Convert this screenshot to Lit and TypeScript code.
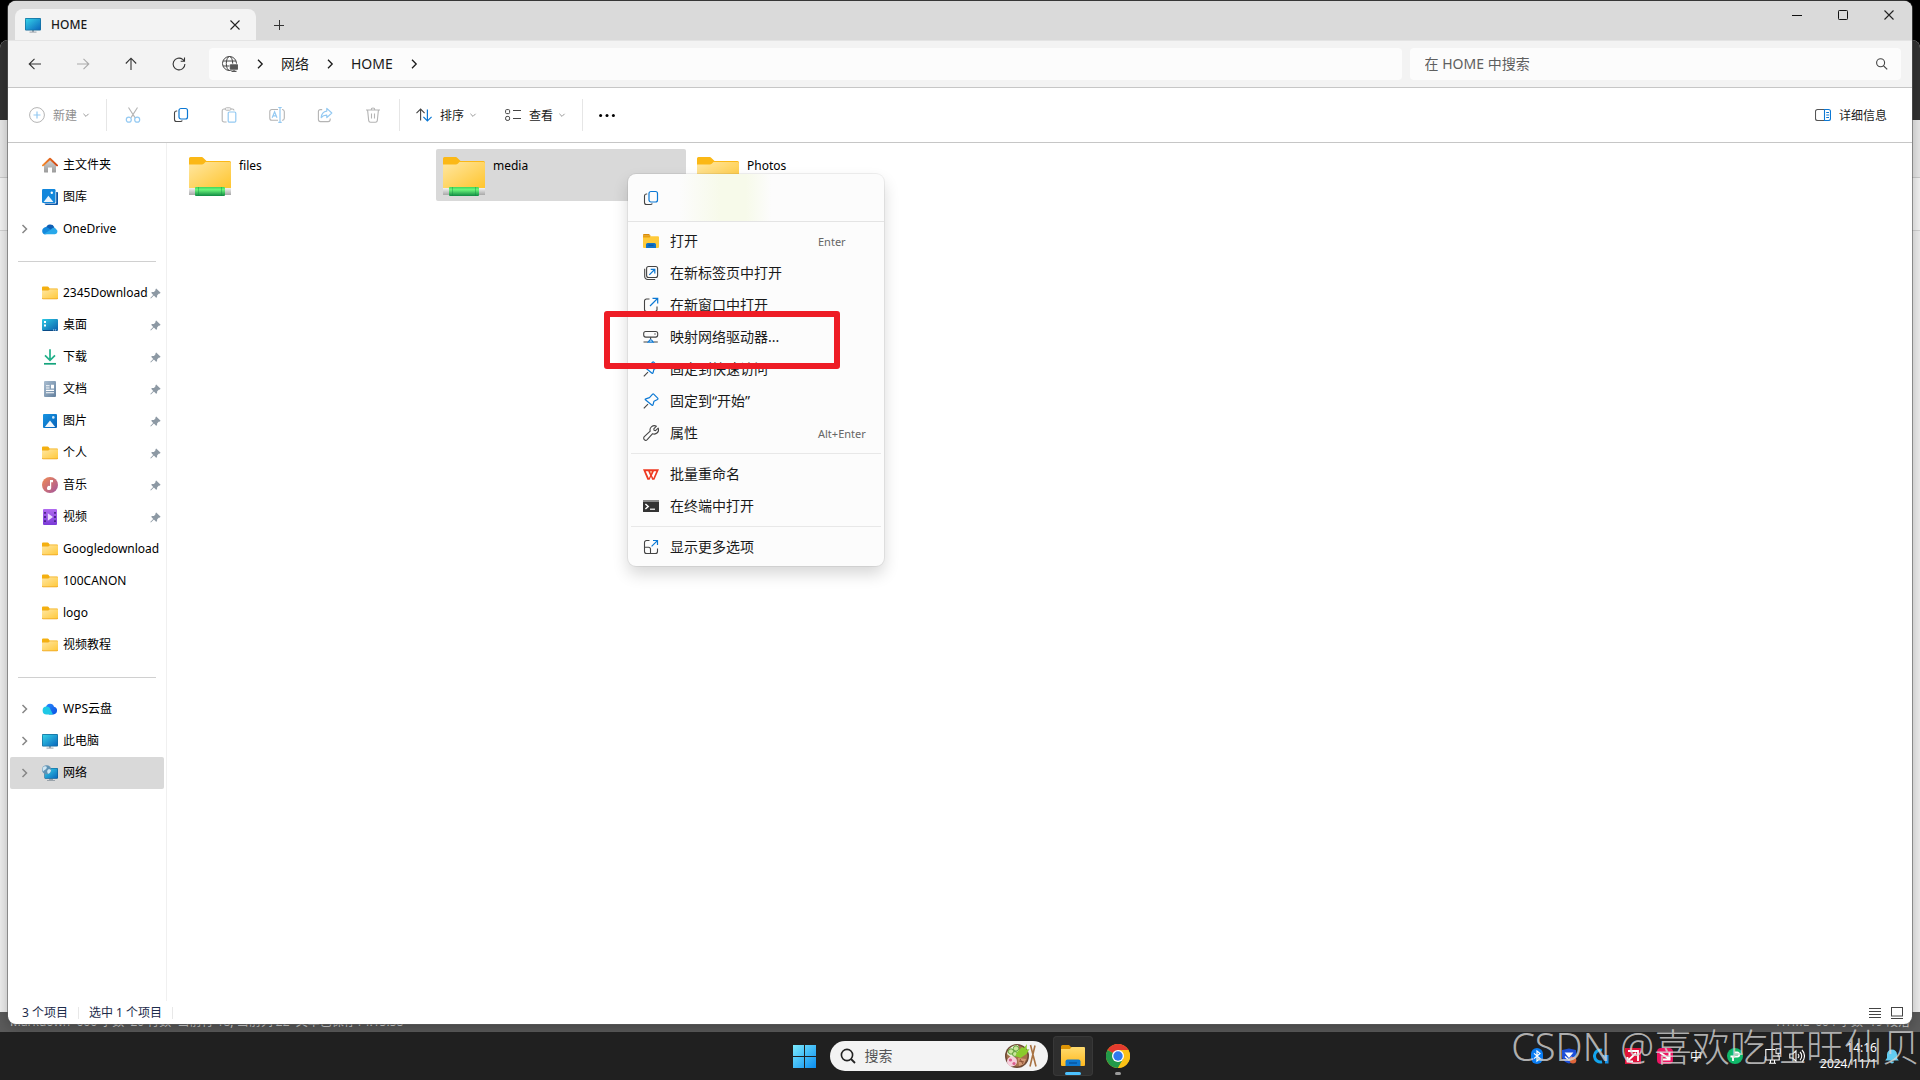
import { LitElement, html, css, nothing, type TemplateResult } from "lit";
import { customElement, state } from "lit/decorators.js";

const BLUE = "#0b78d4";

const copyIcon = html`<svg class="i16" viewBox="0 0 16 16" fill="none" aria-hidden="true">
  <rect x="6" y="1.5" width="8.5" height="10.5" rx="2" stroke="${BLUE}" stroke-width="1.2"/>
  <path d="M4.2 4H3.5a2 2 0 0 0-2 2v6.5a2 2 0 0 0 2 2h4a2 2 0 0 0 1.8-1" stroke="#444" stroke-width="1.1"/></svg>`;

const monitorIcon = html`<svg class="i16" viewBox="0 0 16 16" aria-hidden="true">
  <defs><linearGradient id="mon" x1="0" y1="0" x2="1" y2="1"><stop offset="0" stop-color="#35d3e8"/><stop offset="1" stop-color="#0a67bd"/></linearGradient></defs>
  <path d="M7 13h2v2H7z" fill="#9aa3ab"/><path d="M4.5 14.6h7v1h-7z" fill="#9aa3ab"/>
  <rect x="0" y="1" width="16" height="12.5" rx="1" fill="#146c9c"/><rect x=".7" y="1.7" width="14.6" height="11" rx=".5" fill="url(#mon)"/></svg>`;

const folderIcon = html`<svg class="i16" viewBox="0 0 16 16" aria-hidden="true">
  <defs><linearGradient id="fol" x1="0" y1="0" x2="1" y2="1"><stop offset="0" stop-color="#ffe7a3"/><stop offset="1" stop-color="#ffc93c"/></linearGradient></defs>
  <path d="M0 2.6a1 1 0 0 1 1-1h4.6c.5 0 .8.2 1 .5l1 1.4H15a1 1 0 0 1 1 1V8H0z" fill="#f4b011"/>
  <path d="M0 5.6h6.3l1.6-1.3H16v9a1 1 0 0 1-1 1H1a1 1 0 0 1-1-1z" fill="#eda21b"/>
  <path d="M0 5.4h6.3l1.6-1.2H16v8.4a1 1 0 0 1-1 1H1a1 1 0 0 1-1-1z" fill="url(#fol)"/></svg>`;

const pinIcon = html`<svg class="pin" viewBox="0 0 11 11" aria-hidden="true">
  <path d="M6.2.4 10.6 4.8 9.6 5.7 9 5.4 7.2 7.2 7 9.2 6.1 9.8 3.9 7.6.9 10.6.3 10.1 3.2 6.9 1.2 4.8 2 4 4 3.9 5.7 2 5.4 1.3z" fill="#8d99a4"/></svg>`;

const chevron = html`<svg class="chev" viewBox="0 0 8 12" fill="none" aria-hidden="true"><path d="M2 1.8 6.2 6 2 10.2" stroke="currentColor" stroke-width="1.3"/></svg>`;
const caret = html`<svg class="caret" viewBox="0 0 8 8" fill="none" aria-hidden="true"><path d="M1.4 2.8 4 5.4 6.6 2.8" stroke="#999" stroke-width="1"/></svg>`;

const sideIcons: Record<string, TemplateResult> = {
  folder: folderIcon,
  monitor: monitorIcon,
  home: html`<svg class="i16" viewBox="0 0 16 16" aria-hidden="true">
    <defs><linearGradient id="hm" x1="0" y1="0" x2="0" y2="1"><stop offset="0" stop-color="#d6d6d6"/><stop offset="1" stop-color="#9a9a9a"/></linearGradient>
    <linearGradient id="hr" x1="0" y1="0" x2="1" y2="0"><stop offset="0" stop-color="#f58a2b"/><stop offset="1" stop-color="#cf4413"/></linearGradient></defs>
    <path d="M2 7.4 8 2l6 5.4v7.3a.9.9 0 0 1-.9.9H10v-5.2H6v5.2H2.9a.9.9 0 0 1-.9-.9z" fill="url(#hm)"/>
    <path d="M1 8.4 8 1.7l7 6.7" fill="none" stroke="url(#hr)" stroke-width="2" stroke-linecap="round" stroke-linejoin="round"/></svg>`,
  gallery: html`<svg class="i16" viewBox="0 0 16 16" aria-hidden="true">
    <path d="M3 3h12.2a.8.8 0 0 1 .8.8V15a.9.9 0 0 1-.9.9H4a1.5 1.5 0 0 1-1.5-1.4z" fill="#0b57a8"/>
    <rect x="0" y="0" width="14.2" height="14.6" rx="1.2" fill="#fff"/><rect x="0" y="0" width="13.5" height="14" rx="1.2" fill="#1287dc"/>
    <path d="M1.6 12.9 6.4 6.8l5 6.1z" fill="#e9f4fd"/><circle cx="9.8" cy="3.8" r="1.2" fill="#fff"/></svg>`,
  onedrive: html`<svg class="i16" viewBox="0 0 16 16" aria-hidden="true">
    <path d="M4 6.8A4.4 4.4 0 0 1 12.2 6L12 10H5z" fill="#0f5fb4"/><path d="M.2 10.2A3.7 3.7 0 0 1 6 6.8l5 3.2-7 3.3H3.4A3.2 3.2 0 0 1 .2 10.2z" fill="#1489dc"/>
    <path d="M2 12.9 9 8.6c1.3-2.6 4.2-2.4 4.9-.6A2.8 2.8 0 0 1 13 13.3H3.2c-.5 0-.9-.2-1.2-.4z" fill="#28a8ea"/></svg>`,
  desktop: html`<svg class="i16" viewBox="0 0 16 16" aria-hidden="true">
    <defs><linearGradient id="dk" x1="0" y1="0" x2="1" y2="1"><stop offset="0" stop-color="#2ccbe4"/><stop offset="1" stop-color="#0b5cab"/></linearGradient></defs>
    <rect x="0" y="2" width="16" height="12" rx="1" fill="url(#dk)"/><path d="M2 4h2v2H2zM2 7.4h2v2H2z" fill="#fff"/><path d="M1 13h14v1H1z" fill="#0a4a86"/><path d="M11 12.4h1.2v1H11zM13 12.4h1.2v1H13z" fill="#bfe6ff"/></svg>`,
  download: html`<svg class="i16" viewBox="0 0 16 16" fill="none" aria-hidden="true">
    <path d="M8 .2V11M3 6.4 8 11.4l5-5" stroke="#22b08a" stroke-width="1.7"/><path d="M2 14.8h12" stroke="#14a37c" stroke-width="1.7"/></svg>`,
  doc: html`<svg class="i16" viewBox="0 0 16 16" aria-hidden="true">
    <defs><linearGradient id="dc" x1="0" y1="0" x2="1" y2="1"><stop offset="0" stop-color="#a9bdd0"/><stop offset="1" stop-color="#63809e"/></linearGradient></defs>
    <rect x="2" y="0" width="12" height="16" rx="1" fill="url(#dc)"/><path d="M4 4.2h3.6v1H4zM4 6.4h3.6v1H4zM9 3.8h3v3.6H9zM4 8.8h8v1.1H4zM4 11.2h8v1.1H4z" fill="#fff"/></svg>`,
  picture: html`<svg class="i16" viewBox="0 0 16 16" aria-hidden="true">
    <defs><linearGradient id="pc" x1="0" y1="0" x2="1" y2="1"><stop offset="0" stop-color="#1795e3"/><stop offset="1" stop-color="#0862b8"/></linearGradient></defs>
    <rect x="1" y="1" width="14" height="14" rx="1" fill="url(#pc)"/><path d="M2.8 14 8 7.6 13.2 14z" fill="#f2f8fd"/><circle cx="11.3" cy="4.4" r="1.3" fill="#cfe8fb"/></svg>`,
  music: html`<svg class="i16" viewBox="0 0 16 16" aria-hidden="true">
    <defs><linearGradient id="ms" x1="0" y1="0" x2="1" y2="1"><stop offset="0" stop-color="#f28b53"/><stop offset="1" stop-color="#a2559d"/></linearGradient></defs>
    <circle cx="8" cy="8" r="8" fill="url(#ms)"/><path d="M8 3h3v2.2H9.2V11A2.1 2.1 0 1 1 8 9.1z" fill="#fff"/></svg>`,
  video: html`<svg class="i16" viewBox="0 0 16 16" aria-hidden="true">
    <defs><linearGradient id="vd" x1="0" y1="0" x2="0" y2="1"><stop offset="0" stop-color="#b06af0"/><stop offset="1" stop-color="#7b3bd8"/></linearGradient></defs>
    <rect x="1" y="0" width="14" height="16" rx="1" fill="url(#vd)"/><path d="M2.2 3h1.6v1.8H2.2zM2.2 7.1h1.6v1.8H2.2zM2.2 11.2h1.6V13H2.2zM12.2 3h1.6v1.8h-1.6zM12.2 7.1h1.6v1.8h-1.6zM12.2 11.2h1.6V13h-1.6z" fill="#3c1b78"/><path d="M5.8 4.3 11 8l-5.2 3.8z" fill="#ecdcff"/></svg>`,
  wps: html`<svg class="i16" viewBox="0 0 16 16" aria-hidden="true">
    <defs><linearGradient id="wp" x1="0" y1="0" x2="1" y2="1"><stop offset="0" stop-color="#2a8bff"/><stop offset="1" stop-color="#0a4fe0"/></linearGradient></defs>
    <path d="M4 6a4.1 4.1 0 0 1 8-.3 3.9 3.9 0 0 1-.6 7.7H7z" fill="url(#wp)"/><path d="M4.6 5.4a4 4 0 0 1 3.9 3.2L11 13.4H4.6a4 4 0 0 1 0-8z" fill="#1fc8e6"/></svg>`,
  network: html`<svg class="i16" viewBox="0 0 16 16" aria-hidden="true">
    <path d="M7 13.5h4v1.6H7z" fill="#9aa3ab"/><path d="M5 15h8v1H5z" fill="#9aa3ab"/>
    <rect x="2.4" y="3" width="13.6" height="10.8" rx="1" fill="#0e5c8f"/><rect x="3" y="3.6" width="12.4" height="9.6" rx=".5" fill="url(#mon)"/>
    <circle cx="4.6" cy="4.8" r="4.6" fill="#5f93b5"/><path d="M2 1.6c2-1 3.4 0 2.6 1.6S2.4 4.6 1 6.4C0 4.4.6 2.4 2 1.6zM6 4.6c1.6-1 2.7-.2 3 .8-.3 1.8-1.6 3-3 3.4-.6-1.3-1.6-2.6 0-4.2z" fill="#cfe6f2"/></svg>`,
};

const menuIcons: Record<string, TemplateResult> = {
  open: html`<svg class="i16" viewBox="0 0 16 16" aria-hidden="true">
    <path d="M0 2a1 1 0 0 1 1-1h5l1.6 1.8H0z" fill="#d98b06"/><path d="M0 3.2h15a1 1 0 0 1 1 1V14a1 1 0 0 1-1 1H1a1 1 0 0 1-1-1z" fill="#ffca3a"/><path d="M0 2.8h7.8L6.6 4.4H0z" fill="#e9a010"/>
    <path d="M3 15v-3.4A1.6 1.6 0 0 1 4.6 10h6.8a1.6 1.6 0 0 1 1.6 1.6V15z" fill="#1173c9"/><path d="M5.4 12.2h5.2" stroke="#0a4e96" stroke-width="1"/></svg>`,
  newtab: html`<svg class="i16" viewBox="0 0 16 16" fill="none" aria-hidden="true">
    <rect x="3.6" y="1.5" width="11" height="11" rx="2" stroke="#444" stroke-width="1.1"/><path d="M1.7 3.8v7.7a3 3 0 0 0 3 3h7.5" stroke="#444" stroke-width="1.1"/>
    <path d="M6.3 9.8 11.6 4.5M7.7 4.3h4.1v4.1" stroke="${BLUE}" stroke-width="1.2"/></svg>`,
  newwin: html`<svg class="i16" viewBox="0 0 16 16" fill="none" aria-hidden="true">
    <path d="M6.5 2H3.5a2 2 0 0 0-2 2v8.5a2 2 0 0 0 2 2H12a2 2 0 0 0 2-2V9.5" stroke="#444" stroke-width="1.1"/>
    <path d="M7 9 14.5 1.5M9.5 1.3h5.2v5.2" stroke="${BLUE}" stroke-width="1.2"/></svg>`,
  drive: html`<svg class="i16" viewBox="0 0 16 16" fill="none" aria-hidden="true">
    <rect x=".7" y="2.5" width="14" height="5.6" rx="2" stroke="#444" stroke-width="1.1"/><circle cx="12" cy="5" r=".7" fill="#444"/><path d="M7.6 8.2v2.2M.5 13H5M10.2 13h4.6" stroke="#444" stroke-width="1.1"/>
    <path d="M5.2 13.2 6.8 11h1.8l1.6 2.2z" stroke="${BLUE}" stroke-width="1.2"/></svg>`,
  pin: html`<svg class="i16" viewBox="0 0 16 16" fill="none" aria-hidden="true">
    <path d="M.8 15.4 5 11.2" stroke="#444" stroke-width="1.1"/>
    <path d="M9.6 1.2c.3-.3.8-.3 1.1 0l4 4c.4.4.3 1-.2 1.3L11 8.2l-1 3.7c-.1.5-.7.6-1 .3L2.4 6.8c-.3-.3-.2-.9.3-1L6.5 4.7z" stroke="${BLUE}" stroke-width="1.2" stroke-linejoin="round"/></svg>`,
  wrench: html`<svg class="i16" viewBox="0 0 16 16" fill="none" aria-hidden="true">
    <path d="M13.4 1.2 10.8 3.9l.3 1.4 1.4.4 2.7-2.6a4.3 4.3 0 0 1-5.6 5.6L4.2 14.600a2 2 0 0 1-2.900-2.900L7.200 6.200A4.300 4.300 0 0 1 13.400 1.200z" stroke="#444" stroke-width="1.1" stroke-linejoin="round"/></svg>`,
  wpsw: html`<svg class="i16" viewBox="0 0 16 16" aria-hidden="true">
    <path d="M0 3.3h16L11.4 13.8H9.2L8 10.8 6.6 13.8H4.400z" fill="#ee3a22"/><path d="M2.700 5.300h2.500l1.900 4.300-1.200 2.600zM8.900 9.600l2-4.300h2.400l-3 6.900z" fill="#fff"/><path d="M6.900 5.300h2.200L8 7.800z" fill="#ffd2a6"/></svg>`,
  term: html`<svg class="i16" viewBox="0 0 16 16" aria-hidden="true">
    <rect x="0" y="2" width="16" height="12" rx=".6" fill="#333"/><path d="M0 2h16v2H0z" fill="#8a8a8a"/><path d="M2.400 6 5.200 8.500 2.400 11" stroke="#fff" stroke-width="1.5" fill="none"/><path d="M7 10.600h5v1.200H7z" fill="#fff"/></svg>`,
  more: html`<svg class="i16" viewBox="0 0 16 16" fill="none" aria-hidden="true">
    <path d="M6.500 1.500h-3a2 2 0 0 0-2 2v9a2 2 0 0 0 2 2H12.500a2 2 0 0 0 2-2V9.600M1.500 8.200h4a2 2 0 0 1 2 2v4.300" stroke="#444" stroke-width="1.1"/>
    <path d="M8.600 7.400 14.400 1.600M10 1.500h4.500V6" stroke="${BLUE}" stroke-width="1.2"/></svg>`,
};

type Tool = { label: string; icon: TemplateResult; off: boolean };
const tools: Tool[] = [
  { label: "剪切", off: true, icon: html`<svg class="i16" viewBox="0 0 16 16" fill="none" aria-hidden="true"><path d="M3.5.5 10 10.6M12.5.5 6 10.6" stroke="#b4b4b4" stroke-width="1.1"/><circle cx="3.8" cy="12.7" r="2.5" stroke="#93c9f2" stroke-width="1.2"/><circle cx="12.2" cy="12.7" r="2.5" stroke="#93c9f2" stroke-width="1.2"/></svg>` },
  { label: "复制", off: false, icon: copyIcon },
  { label: "粘贴", off: true, icon: html`<svg class="i16" viewBox="0 0 16 16" fill="none" aria-hidden="true"><path d="M4.2 2H3a1.8 1.8 0 0 0-1.8 1.8v9.4A1.8 1.8 0 0 0 3 15h2.6M10 2h1.4a1.6 1.6 0 0 1 1.6 1.6" stroke="#b4b4b4" stroke-width="1.1"/><rect x="4.2" y=".8" width="5.8" height="2.4" rx="1.2" stroke="#b4b4b4"/><rect x="7.2" y="5" width="7.6" height="10.2" rx="1.2" stroke="#93c9f2" stroke-width="1.2"/></svg>` },
  { label: "重命名", off: true, icon: html`<svg class="i16" viewBox="0 0 16 16" fill="none" aria-hidden="true"><path d="M9 2.5H2.8a2 2 0 0 0-2 2v6.8a2 2 0 0 0 2 2H9M13 2.5a2.2 2.2 0 0 1 2.3 2v6.8a2.2 2.2 0 0 1-2.3 2" stroke="#b4b4b4" stroke-width="1.1"/><path d="M3.2 10.8 5.6 4.8 8 10.8M4.2 8.9h2.8M11 .5v15M9.3.5h3.4M9.3 15.4h3.4" stroke="#93c9f2" stroke-width="1.2"/></svg>` },
  { label: "共享", off: true, icon: html`<svg class="i16" viewBox="0 0 16 16" fill="none" aria-hidden="true"><path d="M5.2 2.6H3.4a2 2 0 0 0-2 2v8a2 2 0 0 0 2 2h7.8a2 2 0 0 0 2-2v-1.2" stroke="#b4b4b4" stroke-width="1.1"/><path d="M9.8 1.4 14.8 6l-5 4.6V8.2c-2.4-.1-4.2.7-5.6 2.4.3-3.6 2-6 5.6-6.5z" stroke="#93c9f2" stroke-width="1.2" stroke-linejoin="round"/></svg>` },
  { label: "删除", off: true, icon: html`<svg class="i16" viewBox="0 0 16 16" fill="none" aria-hidden="true"><path d="M1 3h14M2.6 3.2l1.1 10.4a1.8 1.8 0 0 0 1.8 1.6h5a1.8 1.8 0 0 0 1.8-1.6L13.4 3.2M6.2 2.8a1.8 1.8 0 0 1 3.6 0M6.5 6.4v5.2M9.5 6.4v5.2" stroke="#b4b4b4" stroke-width="1.1"/></svg>` },
];

type SideItem = { label: string; icon: string; pinned?: boolean; expandable?: boolean; selected?: boolean } | null;
const sidebar: SideItem[] = [
  { label: "主文件夹", icon: "home" },
  { label: "图库", icon: "gallery" },
  { label: "OneDrive", icon: "onedrive", expandable: true },
  null,
  { label: "2345Downloads", icon: "folder", pinned: true },
  { label: "桌面", icon: "desktop", pinned: true },
  { label: "下载", icon: "download", pinned: true },
  { label: "文档", icon: "doc", pinned: true },
  { label: "图片", icon: "picture", pinned: true },
  { label: "个人", icon: "folder", pinned: true },
  { label: "音乐", icon: "music", pinned: true },
  { label: "视频", icon: "video", pinned: true },
  { label: "Googledownload", icon: "folder" },
  { label: "100CANON", icon: "folder" },
  { label: "logo", icon: "folder" },
  { label: "视频教程", icon: "folder" },
  null,
  { label: "WPS云盘", icon: "wps", expandable: true },
  { label: "此电脑", icon: "monitor", expandable: true },
  { label: "网络", icon: "network", expandable: true, selected: true },
];

type MenuItem = { label: string; icon: string; keys?: string } | null;
const menuItems: MenuItem[] = [
  { label: "打开", icon: "open", keys: "Enter" },
  { label: "在新标签页中打开", icon: "newtab" },
  { label: "在新窗口中打开", icon: "newwin" },
  { label: "映射网络驱动器...", icon: "drive" },
  { label: "固定到快速访问", icon: "pin" },
  { label: "固定到“开始”", icon: "pin" },
  { label: "属性", icon: "wrench", keys: "Alt+Enter" },
  null,
  { label: "批量重命名", icon: "wpsw" },
  { label: "在终端中打开", icon: "term" },
  null,
  { label: "显示更多选项", icon: "more" },
];

const netFolder = html`<svg class="big" viewBox="0 0 42 39" aria-hidden="true">
  <defs>
    <linearGradient id="nf" x1="0" y1="0" x2="1" y2="1"><stop offset="0" stop-color="#ffe7a2"/><stop offset="1" stop-color="#ffc52e"/></linearGradient>
    <linearGradient id="np" x1="0" y1="0" x2="0" y2="1"><stop offset="0" stop-color="#3fd65c"/><stop offset=".3" stop-color="#6cf57c"/><stop offset="1" stop-color="#0f8a43"/></linearGradient>
    <linearGradient id="ng" x1="0" y1="0" x2="0" y2="1"><stop offset="0" stop-color="#f2f2f2"/><stop offset="1" stop-color="#a8a8a8"/></linearGradient>
  </defs>
  <path d="M0 1.5A1.5 1.5 0 0 1 1.5 0H12c1.2 0 2 .4 2.7 1.2L17.5 4H40.5A1.5 1.5 0 0 1 42 5.5V12H0z" fill="#fbb816"/>
  <path d="M0 7.6h12c1.5 0 2.3-.5 3-1.2L16.5 5H40.6A1.4 1.4 0 0 1 42 6.4V31H0z" fill="url(#nf)"/>
  <path d="M0 31h42v7H0z" fill="url(#ng)"/><rect x="6" y="30" width="30" height="9" rx="1" fill="url(#np)"/>
  <path d="M9.5 30v9M32.5 30v9" stroke="#0f8a43" stroke-opacity=".4"/></svg>`;

const magnifier = html`<svg class="i16" viewBox="0 0 16 16" fill="none" aria-hidden="true"><circle cx="6.6" cy="6.8" r="4" stroke="currentColor" stroke-width="1.1"/><path d="M9.6 9.8 13.2 13.4" stroke="currentColor" stroke-width="1.2"/></svg>`;

const trayIcons: { label: string; icon: TemplateResult }[] = [
  { label: "蓝牙", icon: html`<svg class="i16" viewBox="0 0 16 16" fill="none"><rect x="2" y="0" width="12" height="16" rx="6" fill="#0a7cf2"/><path d="M5 5.4 11 10.6 8 13V3l3 2.4L5 10.6" stroke="#fff" stroke-width="1.2"/></svg>` },
  { label: "安全", icon: html`<svg class="i16" viewBox="0 0 16 16" fill="none"><path d="M1 2 8 .5 15 2v6c0 4-3 6.4-7 7.6C4 14.4 1 12 1 8z" fill="#1d4fd8"/><path d="M3.6 4.600h8.800L8 10z" fill="#fff"/><path d="M4 8.500 8 12l3-3" stroke="#fff" stroke-width="1.4"/><circle cx="12" cy="12.2" r="3.3" fill="#e0653a"/></svg>` },
  { label: "同步", icon: html`<svg class="i16" viewBox="0 0 16 16" fill="none"><path d="M9 2.200A6 6 0 1 0 9 13.800" stroke="#12a5ee" stroke-width="3"/><path d="M9 7h6.500v8.500H12V11z" fill="#1793e6"/></svg>` },
  { label: "显卡", icon: html`<svg class="i16" viewBox="0 0 16 16" fill="none"><rect width="16" height="16" fill="#e0123a"/><path d="M3 3h10v10M3 12.500 11 5M2.500 9v4.500H8" stroke="#fff" stroke-width="1.8"/></svg>` },
  { label: "远程", icon: html`<svg class="i16" viewBox="0 0 16 16" fill="none"><rect width="16" height="16" rx="4" fill="#ec1562"/><path d="M3 4.500 12.500 11M12.500 4v7.500H6" stroke="#fff" stroke-width="2"/></svg>` },
];

@customElement("app-root")
export class AppRoot extends LitElement {
  @state() private query = "";

  static styles = css`
    :host {
      display: block;
      font-family: "Noto Sans", "Noto Sans CJK SC", sans-serif;
      font-size: 12px;
      color: #1a1a1a;
    }
    * { box-sizing: border-box; }
    button { font: inherit; color: inherit; background: none; border: 0; margin: 0; padding: 0; }
    a { color: inherit; text-decoration: none; }
    ul { list-style: none; margin: 0; padding: 0; }
    svg { display: block; flex: none; }
    .i16 { width: 16px; height: 16px; }
    .chev { width: 8px; height: 12px; }
    .caret { width: 8px; height: 8px; margin-left: -3px; }
    .pin { width: 11px; height: 11px; }

    .desktop { position: relative; display: flex; flex-direction: column; min-height: 100vh; background: #000; overflow: hidden; }

    .behind { position: absolute; inset: 40px 0 48px; display: flex; flex-direction: column; background: #f2f2f2; border-radius: 8px 8px 0 0; overflow: hidden; }
    .behind-head { height: 80px; background: #333; }
    .behind-bar { height: 58px; background: #ececec; border-bottom: 1px solid #cfcfcf; }
    .behind-row { height: 53px; background: #f8f8f8; border-bottom: 1px solid #d6d6d6; }
    .behind-body { flex: 1; }
    .behind-foot { display: flex; justify-content: space-between; height: 20px; padding: 0 10px; background: #5c5c5c; color: #d8d8d8; line-height: 20px; white-space: pre; }

    .window { position: relative; flex: 1; display: flex; flex-direction: column; margin: 1px 8px 8px; background: #fff; border-radius: 8px; box-shadow: 0 0 0 1px rgba(90, 90, 90, 0.6), 0 4px 16px rgba(0, 0, 0, 0.3); }
    .titlebar { display: flex; height: 39px; padding-left: 7px; background: #dadada; border-radius: 8px 8px 0 0; }
    .tab { display: flex; align-items: center; width: 241px; margin-top: 8px; padding: 0 13px 0 10px; gap: 10px; background: #f3f3f3; border-radius: 8px 8px 0 0; font-weight: 500; }
    .tab span { flex: 1; }
    .tab button, .newtab { display: grid; place-items: center; width: 16px; height: 16px; }
    .newtab { align-self: flex-end; width: 32px; height: 31px; margin-left: 7px; }
    .caption { display: flex; margin-left: auto; }
    .caption button { display: grid; place-items: center; width: 46px; height: 28px; }
    .g10 { width: 10px; height: 10px; }

    .navbar { display: flex; align-items: center; height: 48px; padding: 0 11px 0 3px; background: #f3f3f3; border-bottom: 1px solid #c6c6c6; border-top: 1px solid #e4e4e4; }
    .nav { display: grid; place-items: center; width: 48px; height: 32px; color: #333; }
    .nav.off { color: #aaa; }
    .crumbs { flex: 12 0 12px; display: flex; align-items: center; gap: 17px; min-width: 0; height: 32px; margin: 0 8px 0 6px; padding: 0 13px; background: #fcfcfc; border-radius: 4px; font-size: 14px; }
    .crumbs .i16 { margin-right: 1px; }
    .crumbs a, .search input, .label, .pill span, .status > span { padding-bottom: 2px; }
    .search { flex: 0 0 26%; display: flex; align-items: center; height: 32px; padding: 0 11px 0 15px; background: #fcfcfc; border-radius: 4px; color: #444; }
    .search input { flex: 1; min-width: 0; border: 0; padding: 0 0 2px; background: none; outline: none; font: inherit; font-size: 14px; color: #1a1a1a; }
    .search input::placeholder { color: #5f5f5f; opacity: 1; }

    .toolbar { display: flex; align-items: center; height: 55px; padding: 0 11px 0 7px; border-bottom: 1px solid #c6c6c6; }
    .tool { display: flex; align-items: center; gap: 8px; height: 40px; padding: 0 14px; white-space: nowrap; }
    .tool.off { color: #8f8f8f; }
    .tool.icon { justify-content: center; width: 48px; padding: 0; }
    .tool.more { width: 44px; }
    .sep { width: 1px; height: 32px; margin: 0 2px; background: #e6e6e6; }
    .tool.details { margin-left: auto; }

    .body { flex: 1; display: flex; }
    .side { width: 159px; padding: 6px 2px 0; border-right: 1px solid #f0f0f0; }
    .side-item { display: flex; align-items: center; width: 154px; height: 32px; padding: 0 0 0 11px; color: #000; border-radius: 2px; text-align: left; }
    .side-item .chev { margin-right: 13px; color: #868686; }
    .side-item .chev.none { visibility: hidden; }
    .side-item .label { flex: 1; margin-left: 5px; overflow: hidden; white-space: nowrap; }
    .side-item .pin { margin: 0 3px 0 2px; }
    .side-item.selected { background: #d9d9d9; }
    .side-line { display: flex; align-items: center; height: 32px; padding: 0 8px; }
    .side-line hr { flex: 1; margin: 0; border: 0; border-top: 1px solid #d0d0d0; }

    .files { flex: 1; display: flex; flex-wrap: wrap; align-content: flex-start; gap: 4px; padding: 6px 15px; }
    .file { display: flex; align-items: flex-start; gap: 8px; width: 250px; height: 52px; padding: 8px 7px; border-radius: 2px; color: #000; line-height: 17px; }
    .file.selected { background: #d9d9d9; }
    .big { width: 42px; height: 39px; }

    .status { display: flex; align-items: center; height: 23px; padding: 0 9px 0 14px; color: #1c2b4a; }
    .status .bar { width: 1px; height: 12px; margin: 0 10px; padding: 0; background: #e8e8e8; }
    .status .views { display: flex; gap: 10px; margin-left: auto; color: #444; }
    .g12 { width: 12px; height: 12px; }

    .menu { position: absolute; left: 628px; top: 174px; width: 256px; padding-bottom: 3px; background: #fcfcfc; border-radius: 8px; box-shadow: 0 0 0 1px rgba(0, 0, 0, 0.06), 0 8px 16px rgba(0, 0, 0, 0.16); font-size: 14px; }
    .menu-top { display: flex; align-items: center; height: 48px; margin-bottom: 3px; padding: 0 15px; border-bottom: 1px solid #e4e4e4; border-radius: 8px 8px 0 0; background: linear-gradient(90deg, rgba(247, 250, 234, 0) 20%, #f7faea 36%, #f7faea 46%, rgba(247, 250, 234, 0) 56%); }
    .menu-item { display: flex; align-items: center; width: 100%; height: 32px; padding: 0 15px; gap: 11px; text-align: left; }
    .menu-item .label { width: 137px; white-space: nowrap; }
    .menu-item kbd { font: inherit; font-size: 11px; color: #666; }
    .menu hr { margin: 4px 3px; border: 0; border-top: 1px solid #e8e8e8; }
    .marker { position: absolute; left: 604px; top: 311px; width: 236px; height: 58px; border: 6px solid #ee1c25; border-radius: 3px; }

    .taskbar { position: relative; display: grid; grid-template-columns: 1fr auto 1fr; align-items: center; height: 48px; background: #202020; }
    .apps { grid-column: 2; display: flex; align-items: center; gap: 5px; padding-left: 2px; }
    .app { position: relative; display: grid; place-items: center; width: 40px; height: 40px; border-radius: 4px; }
    .app.active { background: #2e2e2e; box-shadow: inset 0 0 0 1px #383838; }
    .app::after { content: ""; position: absolute; bottom: 1px; width: 6px; height: 3px; border-radius: 2px; background: #9a9a9a; }
    .app.active::after { width: 16px; background: #4cc2ff; }
    .app.start::after { content: none; }
    .g23 { width: 23px; height: 23px; }
    .g24 { width: 24px; height: 24px; }
    .pill { display: flex; align-items: center; gap: 9px; width: 218px; height: 30px; padding: 0 10px; border-radius: 15px; background: #f3f3f3; font-size: 14px; color: #555; }
    .pill .i16 { color: #222; }
    .pill span { flex: 1; text-align: left; }
    .food { width: 33px; height: 26px; }
    .tray { grid-column: 3; justify-self: end; display: flex; align-items: center; padding-right: 20px; color: #fff; }
    .tray .row { display: flex; gap: 16px; }
    .tray .ime { margin-left: 15px; width: 16px; text-align: center; }
    .tray .note { margin-left: 23px; }
    .tray .sys { display: flex; gap: 8px; margin-left: 22px; }
    .clock { width: 72px; text-align: right; line-height: 16px; font-size: 12px; }
    .bell { margin-left: 7px; }

    .watermark { position: absolute; right: 0; bottom: 5px; font-size: 38px; line-height: 58px; font-weight: 300; color: rgba(215, 215, 215, 0.8); white-space: nowrap; pointer-events: none; }
  `;

  private sideRow(item: SideItem) {
    if (!item) return html`<li class="side-line"><hr /></li>`;
    return html`<li><button class="side-item ${item.selected ? "selected" : ""}">
      <svg class="chev ${item.expandable ? "" : "none"}" viewBox="0 0 8 12" fill="none" aria-hidden="true"><path d="M1.500 2 5.500 6 1.500 10" stroke="currentColor" stroke-width="1.5"/></svg>
      ${sideIcons[item.icon]}<span class="label">${item.label}</span>${item.pinned ? pinIcon : nothing}
    </button></li>`;
  }

  private menuRow(item: MenuItem) {
    if (!item) return html`<hr />`;
    return html`<button class="menu-item" role="menuitem">${menuIcons[item.icon]}<span class="label">${item.label}</span>${item.keys ? html`<kbd>${item.keys}</kbd>` : nothing}</button>`;
  }

  private backWindow() {
    return html`<div class="behind" aria-hidden="true">
      <div class="behind-head"></div><div class="behind-bar"></div><div class="behind-row"></div><div class="behind-body"></div>
      <div class="behind-foot"><span>Markdown  666 字数  20 行数  当前行 18, 当前列 22  文章已保存14:15:58</span><span>HTML  604 字数  19 段落</span></div>
    </div>`;
  }

  private titlebar() {
    const x = html`<svg class="g10" viewBox="0 0 10 10"><path d="M.5.5 9.5 9.5M9.5.5.5 9.5" stroke="#222" stroke-width="1.1"/></svg>`;
    return html`<header class="titlebar">
      <div class="tab">${monitorIcon}<span>HOME</span><button aria-label="关闭标签页">${x}</button></div>
      <button class="newtab" aria-label="新标签页"><svg class="g10" viewBox="0 0 10 10"><path d="M0 5.5h10M5.5 0v10" stroke="#333" stroke-width="1"/></svg></button>
      <div class="caption">
        <button aria-label="最小化"><svg class="g10" viewBox="0 0 10 10"><path d="M0 5.5h10" stroke="#111"/></svg></button>
        <button aria-label="最大化"><svg class="g10" viewBox="0 0 10 10" fill="none"><rect x=".5" y=".5" width="9" height="9" rx=".8" stroke="#111"/></svg></button>
        <button aria-label="关闭">${x}</button>
      </div>
    </header>`;
  }

  private navbar() {
    return html`<nav class="navbar">
      <button class="nav" aria-label="后退"><svg class="i16" viewBox="0 0 16 16" fill="none"><path d="M14 8H2.5M7.5 2.8 2.2 8l5.3 5.2" stroke="currentColor" stroke-width="1.1"/></svg></button>
      <button class="nav off" aria-label="前进" disabled><svg class="i16" viewBox="0 0 16 16" fill="none"><path d="M2 8h11.5M8.5 2.8 13.8 8l-5.3 5.2" stroke="currentColor" stroke-width="1.1"/></svg></button>
      <button class="nav" aria-label="上移"><svg class="i16" viewBox="0 0 16 16" fill="none"><path d="M8 14V2.5M2.8 7.5 8 2.2l5.2 5.3" stroke="currentColor" stroke-width="1.1"/></svg></button>
      <button class="nav" aria-label="刷新"><svg class="i16" viewBox="0 0 16 16" fill="none"><path d="M13.9 8A5.9 5.9 0 1 1 11.7 3.4L13.4 5M13.5 1.5v3.8H9.7" stroke="currentColor" stroke-width="1.1"/></svg></button>
      <div class="crumbs">
        <svg class="i16" viewBox="0 0 16 16" fill="none" aria-hidden="true"><circle cx="7.5" cy="7.5" r="7" stroke="#444"/><ellipse cx="7.5" cy="7.5" rx="3.2" ry="7" stroke="#444"/><path d="M1 5h13M1 10h8" stroke="#444"/><rect x="7.6" y="8" width="8.8" height="6" rx="1" fill="#555" stroke="#fcfcfc" stroke-width=".5"/><path d="M9.5 15.4h5M12 14v1.5" stroke="#555" stroke-width="1.2"/></svg>
        ${chevron}<a href="#network">网络</a>${chevron}<a href="#home">HOME</a>${chevron}
      </div>
      <label class="search"><input type="text" aria-label="搜索" placeholder="在 HOME 中搜索" .value=${this.query}
        @input=${(e: Event) => (this.query = (e.target as HTMLInputElement).value)} />${magnifier}</label>
    </nav>`;
  }

  private toolbar() {
    return html`<div class="toolbar" role="toolbar">
      <button class="tool off" disabled><svg class="i16" viewBox="0 0 16 16" fill="none" aria-hidden="true"><circle cx="8" cy="8" r="7.4" stroke="#b4b4b4"/><path d="M8 4.5v7M4.5 8h7" stroke="#93c9f2" stroke-width="1.2"/></svg>新建${caret}</button>
      <span class="sep"></span>
      ${tools.map((t) => html`<button class="tool icon" aria-label=${t.label} ?disabled=${t.off}>${t.icon}</button>`)}
      <span class="sep"></span>
      <button class="tool"><svg class="i16" viewBox="0 0 16 16" fill="none" aria-hidden="true"><path d="M4.6 13.5V2.2M.5 6.2 4.6 2l4 4.2" stroke="#444" stroke-width="1.1"/><path d="M11.4 2.5v11.3M7.4 9.8l4 4.2 4.2-4.2" stroke="${BLUE}" stroke-width="1.2"/></svg>排序${caret}</button>
      <button class="tool"><svg class="i16" viewBox="0 0 16 16" fill="none" aria-hidden="true"><rect x=".6" y="2.6" width="4" height="4" rx="1" stroke="#444"/><rect x=".6" y="9.4" width="4" height="4" rx="1.5" stroke="#444"/><path d="M8 3.5h8M8 11.5h8" stroke="#444"/></svg>查看${caret}</button>
      <span class="sep"></span>
      <button class="tool icon more" aria-label="更多"><svg class="i16" viewBox="0 0 16 16" aria-hidden="true"><circle cx="1.6" cy="8.5" r="1.5"/><circle cx="8" cy="8.5" r="1.5"/><circle cx="14.4" cy="8.5" r="1.5"/></svg></button>
      <button class="tool details"><svg class="i16" viewBox="0 0 16 16" fill="none" aria-hidden="true"><path d="M9.5 2.5h-7a2 2 0 0 0-2 2v7a2 2 0 0 0 2 2h7" stroke="#555" stroke-width="1.1"/><path d="M9.5 2.5h4a2 2 0 0 1 2 2v7a2 2 0 0 1-2 2h-4zM11.2 5.5h3M11.2 8h3M11.2 10.5h3" stroke="${BLUE}" stroke-width="1.1"/></svg>详细信息</button>
    </div>`;
  }

  private taskbar() {
    return html`<footer class="taskbar">
      <div class="apps">
        <button class="app start" aria-label="开始"><svg class="g23" viewBox="0 0 23 23"><defs><linearGradient id="wn" gradientUnits="userSpaceOnUse" x1="0" y1="0" x2="23" y2="23"><stop offset="0" stop-color="#7beafd"/><stop offset="1" stop-color="#0a8df0"/></linearGradient></defs><path d="M0 0h11v11H0zM12 0h11v11H12zM0 12h11v11H0zM12 12h11v11H12z" fill="url(#wn)"/></svg></button>
        <button class="pill"><svg class="i16" viewBox="0 0 16 16" fill="none" aria-hidden="true"><circle cx="7" cy="7" r="5.6" stroke="currentColor" stroke-width="1.6"/><path d="M11 11 15 15" stroke="currentColor" stroke-width="1.8"/></svg><span>搜索</span>
          <svg class="food" viewBox="0 0 33 26" aria-hidden="true">
            <circle cx="12" cy="13" r="12" fill="#6d4a35"/><circle cx="12" cy="13" r="10.5" fill="#a5714c"/>
            <path d="M2 11C3 5 8 2 13 2l2 9-8 4z" fill="#e9f3d6"/><circle cx="6" cy="8.5" r="2.7" fill="#cbe69b" stroke="#5fa03a"/><circle cx="11" cy="5.5" r="2.7" fill="#cbe69b" stroke="#5fa03a"/><circle cx="10" cy="11" r="2.5" fill="#cbe69b" stroke="#5fa03a"/>
            <path d="M12 9 17 4l2 1 3-4-.5 6 3-1-3 5-6 4-5-2z" fill="#8acb2d"/>
            <circle cx="7" cy="18.5" r="5" fill="#f6cfdc"/><circle cx="5.5" cy="17" r="1.6" fill="#dc5d8e"/><circle cx="9" cy="20.5" r="1.6" fill="#dc5d8e"/><path d="M13 15l8 1-2 5-5 2z" fill="#d49a76"/><path d="M14 18l5 1M15 16l3 5" stroke="#8a4f33"/>
            <path d="M25.5 2 31 23.5M30 2.5 25 23.5" stroke="#a87242" stroke-width="1.6"/></svg>
        </button>
        <button class="app active" aria-label="文件资源管理器"><svg class="g24" viewBox="0 0 24 24"><defs><linearGradient id="ex" x1="0" y1="0" x2="0" y2="1"><stop offset="0" stop-color="#ffdb6e"/><stop offset="1" stop-color="#ffb91f"/></linearGradient></defs><path d="M0 2.5A1.5 1.5 0 0 1 1.500 1H8l2.500 2.500V8H0z" fill="#dd9405"/><path d="M0 5h9l1.500-2H23a1 1 0 0 1 1 1v17a1 1 0 0 1-1 1H1a1 1 0 0 1-1-1z" fill="url(#ex)"/><path d="M4.500 22v-4.500a2 2 0 0 1 2-2h11a2 2 0 0 1 2 2V22z" fill="#0f78cf"/><path d="M8 19h8" stroke="#0a549c" stroke-width="1.4"/></svg></button>
        <button class="app" aria-label="Chrome"><svg class="g24" viewBox="0 0 24 24"><circle cx="12" cy="12" r="12" fill="#fbc116"/><path d="M12 12 1.600 6A12 12 0 0 1 22.400 6z" fill="#e33b2e"/><path d="M1.600 6A12 12 0 0 0 12 24l5.200-9L12 12z" fill="#229a49"/><path d="M22.400 6H12v6l5.200 3L12 24A12 12 0 0 0 22.400 6z" fill="#fbc116"/><circle cx="12" cy="12" r="6" fill="#fff"/><circle cx="12" cy="12" r="4.700" fill="#2f79ee"/></svg></button>
      </div>
      <div class="tray">
        <div class="row">${trayIcons.map((t) => html`<button aria-label=${t.label}>${t.icon}</button>`)}</div>
        <span class="ime">中</span>
        <svg class="i16 note" viewBox="0 0 16 16" fill="none" aria-hidden="true"><circle cx="8" cy="8" r="8" fill="#10b86a"/><path d="M6 13V8M3.500 8.500h6.800a2 2 0 0 0 0-4H7.500" stroke="#fff" stroke-width="1.8"/></svg>
        <div class="sys">
          <svg class="i16" viewBox="0 0 16 16" fill="none" aria-hidden="true"><path d="M10 1.500H.800V12h13.400V8M4 15.200h7M5.500 12v3M9.500 12v3" stroke="#fff" stroke-width="1.1"/><rect x="11" y=".8" width="4.500" height="4.500" stroke="#fff"/><path d="M13.200 5.300V9" stroke="#fff"/></svg>
          <svg class="i16" viewBox="0 0 16 16" fill="none" aria-hidden="true"><path d="M.800 6v4h2.800L7 13.200V2.800L3.600 6zM9 6a3 3 0 0 1 0 4M11 4a5.500 5.500 0 0 1 0 8M13 2a8.500 8.500 0 0 1 0 12" stroke="#fff" stroke-width="1.1"/></svg>
        </div>
        <div class="clock"><div>14:16</div><div>2024/11/1</div></div>
        <svg class="i16 bell" viewBox="0 0 16 16" aria-hidden="true"><path d="M8 1.500a5 5 0 0 1 5 5V10l1.800 2.600H1.200L3 10V6.500a5 5 0 0 1 5-5z" fill="#62cdf2"/><path d="M6 13.500h4a2 2 0 0 1-4 0z" fill="#62cdf2"/></svg>
      </div>
    </footer>`;
  }

  render() {
    return html`<div class="desktop">
      ${this.backWindow()}
      <main class="window">
        ${this.titlebar()}${this.navbar()}${this.toolbar()}
        <div class="body">
          <ul class="side">${sidebar.map((s) => this.sideRow(s))}</ul>
          <div class="files">
            ${["files", "media", "Photos"].map((name) => html`<a class="file ${name === "media" ? "selected" : ""}" href="#${name}">${netFolder}<span>${name}</span></a>`)}
          </div>
        </div>
        <div class="status">
          <span>3 个项目</span><span class="bar"></span><span>选中 1 个项目</span><span class="bar"></span>
          <div class="views">
            <button aria-label="详细列表"><svg class="g12" viewBox="0 0 12 12"><path d="M0 1.500h12M0 4.500h12M0 7.500h12M0 10.500h12" stroke="currentColor"/></svg></button>
            <button aria-label="大图标"><svg class="g12" viewBox="0 0 12 12" fill="none"><rect x=".5" y=".5" width="11" height="8.500" stroke="currentColor"/><path d="M0 11.500h12" stroke="currentColor"/></svg></button>
          </div>
        </div>
      </main>
      ${this.taskbar()}
      <div class="menu" role="menu">
        <div class="menu-top"><button aria-label="复制">${copyIcon}</button></div>
        ${menuItems.map((m) => this.menuRow(m))}
      </div>
      <div class="marker"></div>
      <div class="watermark">CSDN @喜欢吃旺旺仙贝</div>
    </div>`;
  }
}
